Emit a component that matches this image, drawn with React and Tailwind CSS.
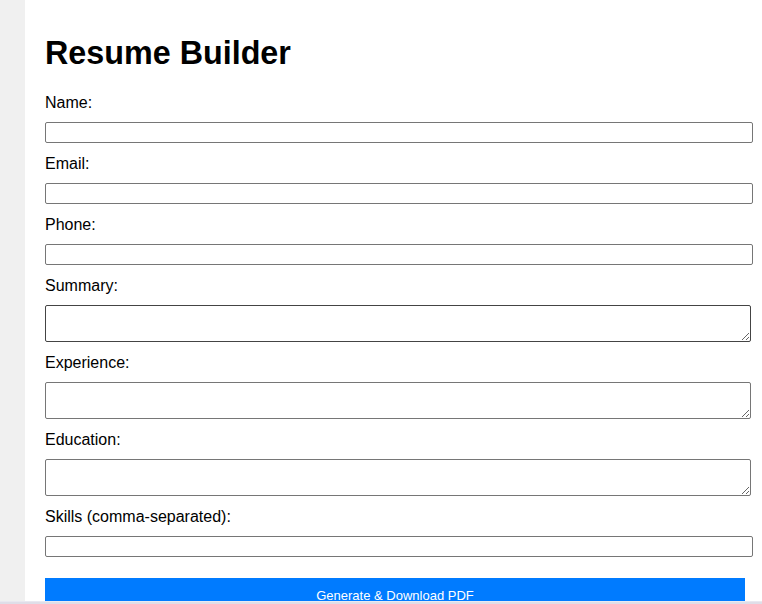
import React, { useState } from "react";

const fields = [
  { key: "name", label: "Name:", type: "input" },
  { key: "email", label: "Email:", type: "input" },
  { key: "phone", label: "Phone:", type: "input" },
  { key: "summary", label: "Summary:", type: "textarea", dark: true },
  { key: "experience", label: "Experience:", type: "textarea" },
  { key: "education", label: "Education:", type: "textarea" },
  { key: "skills", label: "Skills (comma-separated):", type: "input" }
];

function App() {
  const [formData, setFormData] = useState({});

  const handleChange = (field, value) => {
    setFormData(prev => ({ ...prev, [field]: value }));
  };

  return (
    <div className="w-[762px] h-[604px] overflow-hidden flex flex-col font-['Liberation_Sans',Arial,sans-serif]">
      <div className="flex-1 min-h-0 overflow-hidden bg-[#f0f0f0] pl-[25px] flex">
        <div className="w-[740px] shrink-0 bg-white px-[20px] pt-[35px]">
          <h1 className="text-[32.3px] leading-[37px] font-bold text-black mb-[21px]">Resume Builder</h1>

          {fields.map((f) => (
            <div key={f.key}>
              {/* label + control */}
              <label className="block text-[16px] leading-[20px] text-black mb-[9px]">{f.label}</label>
              {f.type === "input" ? (
                <input
                  type="text"
                  value={formData[f.key] || ""}
                  onChange={(e) => handleChange(f.key, e.target.value)}
                  className="block w-[708px] h-[21px] mb-[11px] px-[2px] text-[13.33px] border border-[#767676] rounded-[2px] bg-white outline-none"
                />
              ) : (
                <textarea
                  value={formData[f.key] || ""}
                  onChange={(e) => handleChange(f.key, e.target.value)}
                  className={
                    "block w-[706px] h-[37px] mb-[11px] p-[2px] text-[13.33px] font-['Liberation_Mono',monospace] border rounded-[2px] bg-white outline-none " +
                    (f.dark ? "border-[#444444]" : "border-[#767676]")
                  }
                />
              )}
            </div>
          ))}

          {/* margin collapses with the last input's mb-[11px] */}
          <button
            type="button"
            className="block w-[700px] mt-[21px] py-[10px] bg-[#007bff] text-white text-[13px] leading-[15px] text-center"
          >
            Generate &amp; Download PDF
          </button>
        </div>
      </div>
      <div className="h-[3px] shrink-0 bg-[#dfdee8] border-t border-[#e9e8f0]" />
    </div>
  );
}

export default App;
